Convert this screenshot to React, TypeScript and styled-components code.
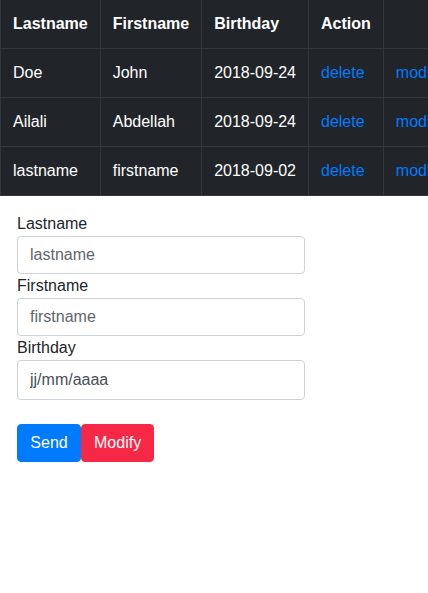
import React from "react";
import styled, { createGlobalStyle } from "styled-components";

const GlobalStyle = createGlobalStyle`
  html, body {
    margin: 0;
    padding: 0;
    overflow: hidden;
    background: #fff;
  }
  body {
    font-family: "Liberation Sans", Arial, sans-serif;
    font-size: 16px;
    line-height: 24px;
    color: #212529;
  }
  * { box-sizing: border-box; }
`;

const Table = styled.table`
  width: 100%;
  border-collapse: collapse;
  background: #212529;
  color: #fff;
  margin-bottom: 16px;
`;

const Th = styled.th`
  text-align: left;
  font-weight: 700;
  padding: 12px;
  border: 1px solid #32383e;
  border-top: 0;
  white-space: nowrap;
`;

const Td = styled.td`
  padding: 12px;
  border: 1px solid #32383e;
  white-space: nowrap;
`;

const Link = styled.a`
  color: #007bff;
  text-decoration: none;
  cursor: pointer;
`;

const Form = styled.form`
  display: flex;
  flex-direction: column;
  width: 288px;
  margin-left: 17px;
`;

const Label = styled.label`
  display: block;
  font-size: 16px;
  line-height: 24px;
  color: #212529;
`;

const Input = styled.input<{ $tall?: boolean }>`
  display: block;
  width: 100%;
  height: ${(p) => (p.$tall ? "40px" : "38px")};
  padding: 6px 12px;
  font-family: "Liberation Sans", Arial, sans-serif;
  font-size: 16px;
  line-height: 24px;
  color: #495057;
  background: #fff;
  border: 1px solid #ced4da;
  border-radius: 4px;
  outline: none;
  &::placeholder {
    color: ${(p) => (p.$tall ? "#495057" : "#5f666d")};
    opacity: 1;
  }
`;

const Buttons = styled.div`
  display: flex;
  margin-top: 24px;
`;

const Button = styled.button<{ $variant: "primary" | "danger" }>`
  font-family: "Liberation Sans", Arial, sans-serif;
  font-size: 16px;
  line-height: 24px;
  padding: 6px 12px;
  min-width: ${(p) => (p.$variant === "primary" ? "64px" : "auto")};
  border: 1px solid ${(p) => (p.$variant === "primary" ? "#007bff" : "#f62846")};
  background: ${(p) => (p.$variant === "primary" ? "#007bff" : "#f62846")};
  color: #fff;
  border-radius: 4px;
  cursor: pointer;
`;

const rows = [
  { last: "Doe", first: "John", birthday: "2018-09-24" },
  { last: "Ailali", first: "Abdellah", birthday: "2018-09-24" },
  { last: "lastname", first: "firstname", birthday: "2018-09-02" },
];

export default function App() {
  return (
    <>
      <GlobalStyle />
      <Table>
        <thead>
          <tr>
            <Th>Lastname</Th>
            <Th>Firstname</Th>
            <Th>Birthday</Th>
            <Th>Action</Th>
            <Th></Th>
          </tr>
        </thead>
        <tbody>
          {rows.map((r, i) => (
            <tr key={i}>
              <Td>{r.last}</Td>
              <Td>{r.first}</Td>
              <Td>{r.birthday}</Td>
              <Td>
                <Link>delete</Link>
              </Td>
              <Td>
                <Link>modify</Link>
              </Td>
            </tr>
          ))}
        </tbody>
      </Table>
      <Form onSubmit={(e) => e.preventDefault()}>
        <Label>Lastname</Label>
        <Input placeholder="lastname" />
        <Label>Firstname</Label>
        <Input placeholder="firstname" />
        <Label>Birthday</Label>
        <Input $tall placeholder="jj/mm/aaaa" />
        <Buttons>
          <Button $variant="primary" type="submit">Send</Button>
          <Button $variant="danger" type="button">Modify</Button>
        </Buttons>
      </Form>
    </>
  );
}
